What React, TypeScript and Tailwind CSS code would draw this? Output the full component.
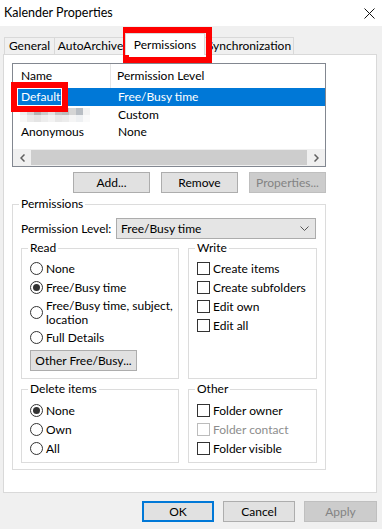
import React from "react";

function Radio({ checked }: { checked?: boolean }) {
  return (
    <span className="w-[13px] h-[13px] rounded-full border border-[#333333] bg-white flex items-center justify-center shrink-0">
      {checked && <span className="w-[7px] h-[7px] rounded-full bg-[#333333]" />}
    </span>
  );
}

function Check({ disabled }: { disabled?: boolean }) {
  return (
    <span
      className={
        disabled
          ? "w-[13px] h-[13px] border border-[#bcbcbc] bg-white shrink-0"
          : "w-[13px] h-[13px] border border-[#333333] bg-white shrink-0"
      }
    />
  );
}

function Btn({ label, w, disabled }: { label: string; w: string; disabled?: boolean }) {
  return (
    <button
      className={
        disabled
          ? `${w} h-[21px] bg-[#cccccc] border border-[#bfbfbf] text-[#838383] flex items-center justify-center`
          : `${w} h-[21px] bg-[#e1e1e1] border border-[#adadad] text-black flex items-center justify-center`
      }
    >
      {label}
    </button>
  );
}

const blur = [
  ["#eeeeee", "#d6d6d6", "#b4b4b4", "#cbcbcb", "#e2e2e2", "#c4c4c4", "#bdbdbd", "#d5d5d5", "#b9bec4", "#f2f2f2"],
  ["#f7f7f7", "#eaeaea", "#e4e4e4", "#ededed", "#f3f3f3", "#e8e8e8", "#ececec", "#f5f5f5", "#eef0f2", "#fafafa"],
];

export default function App() {
  return (
    <div className="w-[382px] h-[529px] bg-[#f0f0f0] relative overflow-hidden font-['Lato','Liberation_Sans',sans-serif] text-[12px] leading-[16px] text-black">
      {/* title bar */}
      <div className="h-[26px] bg-white flex items-center justify-between pl-[4px] pr-[7px]">
        <span className="text-[12.5px]">Kalender Properties</span>
        <svg width="11" height="11" viewBox="0 0 11 11">
          <path d="M0.5 0.5 L10.5 10.5 M10.5 0.5 L0.5 10.5" stroke="#111" strokeWidth="1" />
        </svg>
      </div>

      {/* tabs */}
      <div className="mt-[7px] h-[21px] flex items-end pl-[4px]">
        <div className="w-[51px] h-[17px] border border-b-0 border-[#d9d9d9] bg-[#f0f0f0] flex items-center justify-center">General</div>
        <div className="w-[72px] h-[17px] border border-b-0 border-l-0 border-[#d9d9d9] bg-[#f0f0f0] flex items-center justify-center">AutoArchive</div>
        <div className="w-[80px] -mx-[2px] h-[22px] border border-b-0 border-[#d9d9d9] bg-white flex items-center justify-center relative z-10 -mb-[1px]">Permissions</div>
        <div className="w-[91px] h-[17px] border border-b-0 border-l-0 border-[#d9d9d9] bg-[#f0f0f0] flex items-center justify-center pl-[2px]">Synchronization</div>
      </div>

      {/* tab page */}
      <div className="ml-[3px] w-[374px] h-[439px] bg-white border border-[#d9d9d9] pt-[8px] pl-[8px]">
        {/* list view */}
        <div className="w-[314px] h-[104px] border border-[#828790] flex flex-col">
          <div className="h-[24px] flex items-center">
            <div className="w-[98px] h-full pl-[8px] flex items-center border-r border-[#e5e5e5]">Name</div>
            <div className="pl-[6px]">Permission Level</div>
          </div>
          <div className="h-[18px] flex items-center bg-[#0078d7] text-white">
            <div className="w-[98px] pl-[8px]">Default</div>
            <div className="pl-[7px]">Free/Busy time</div>
          </div>
          <div className="h-[17px] flex items-center">
            <div className="w-[98px] pl-[7px]">
              <div className="flex flex-col w-[70px]">
                {blur.map((row, i) => (
                  <div key={i} className="flex">
                    {row.map((c, j) => (
                      <span key={j} className="w-[7px] h-[7px]" style={{ background: c }} />
                    ))}
                  </div>
                ))}
              </div>
            </div>
            <div className="pl-[7px]">Custom</div>
          </div>
          <div className="h-[17px] flex items-center">
            <div className="w-[98px] pl-[8px]">Anonymous</div>
            <div className="pl-[7px]">None</div>
          </div>
          <div className="flex-1" />
          <div className="h-[17px] flex items-center bg-[#f0f0f0]">
            <div className="w-[18px] flex justify-center">
              <svg width="5" height="8" viewBox="0 0 5 8">
                <path d="M4.5 0.5 L1 4 L4.5 7.5" stroke="#606060" strokeWidth="1.5" fill="none" />
              </svg>
            </div>
            <div className="flex-1 h-[15px] bg-[#cdcdcd]" />
            <div className="w-[18px] flex justify-center">
              <svg width="5" height="8" viewBox="0 0 5 8">
                <path d="M0.5 0.5 L4 4 L0.5 7.5" stroke="#606060" strokeWidth="1.5" fill="none" />
              </svg>
            </div>
          </div>
        </div>

        {/* list buttons */}
        <div className="w-[314px] mt-[5px] flex justify-end gap-[11px]">
          <Btn label="Add..." w="w-[77px]" />
          <Btn label="Remove" w="w-[77px]" />
          <Btn label="Properties..." w="w-[77px]" disabled />
        </div>

        {/* permissions group */}
        <fieldset className="mt-[3px] w-[314px] h-[274px] border border-[#dcdcdc]">
          <legend className="ml-[6px] px-[2px] leading-[16px]">Permissions</legend>
          <div className="mt-[6px] pl-[8px] flex items-center">
            <span className="w-[95px]">Permission Level:</span>
            <div className="w-[200px] h-[21px] bg-[#e5e5e5] border border-[#acacac] flex items-center justify-between pl-[4px] pr-[6px]">
              <span>Free/Busy time</span>
              <svg width="9" height="5" viewBox="0 0 9 5">
                <path d="M0.5 0.5 L4.5 4.5 L8.5 0.5" stroke="#555" strokeWidth="1" fill="none" />
              </svg>
            </div>
          </div>

          <div className="mt-[1px] pl-[8px] flex gap-[9px]">
            <fieldset className="w-[158px] h-[139px] border border-[#dcdcdc]">
              <legend className="ml-[6px] px-[2px] leading-[16px]">Read</legend>
              <div className="mt-[3px] pl-[8px] flex flex-col">
                <div className="h-[19px] flex items-center gap-[3px]"><Radio />None</div>
                <div className="h-[19px] flex items-center gap-[3px]"><Radio checked />Free/Busy time</div>
                <div className="h-[31px] flex items-center gap-[3px] leading-[14px]">
                  <Radio />
                  <span>Free/Busy time, subject,<br />location</span>
                </div>
                <div className="h-[19px] flex items-center gap-[3px]"><Radio />Full Details</div>
                <div className="mt-[3px]">
                  <Btn label="Other Free/Busy..." w="w-[107px]" />
                </div>
              </div>
            </fieldset>
            <fieldset className="w-[129px] h-[139px] border border-[#dcdcdc]">
              <legend className="ml-[6px] px-[2px] leading-[16px]">Write</legend>
              <div className="mt-[3px] pl-[8px] flex flex-col">
                <div className="h-[19px] flex items-center gap-[3px]"><Check />Create items</div>
                <div className="h-[19px] flex items-center gap-[3px]"><Check />Create subfolders</div>
                <div className="h-[19px] flex items-center gap-[3px]"><Check />Edit own</div>
                <div className="h-[19px] flex items-center gap-[3px]"><Check />Edit all</div>
              </div>
            </fieldset>
          </div>

          <div className="mt-[2px] pl-[8px] flex gap-[9px]">
            <fieldset className="w-[158px] h-[82px] border border-[#dcdcdc]">
              <legend className="ml-[6px] px-[2px] leading-[16px]">Delete items</legend>
              <div className="mt-[4px] pl-[8px] flex flex-col">
                <div className="h-[19px] flex items-center gap-[3px]"><Radio checked />None</div>
                <div className="h-[19px] flex items-center gap-[3px]"><Radio />Own</div>
                <div className="h-[19px] flex items-center gap-[3px]"><Radio />All</div>
              </div>
            </fieldset>
            <fieldset className="w-[129px] h-[82px] border border-[#dcdcdc]">
              <legend className="ml-[6px] px-[2px] leading-[16px]">Other</legend>
              <div className="mt-[4px] pl-[8px] flex flex-col">
                <div className="h-[19px] flex items-center gap-[3px]"><Check />Folder owner</div>
                <div className="h-[19px] flex items-center gap-[3px] text-[#8d8d8d]"><Check disabled />Folder contact</div>
                <div className="h-[19px] flex items-center gap-[3px]"><Check />Folder visible</div>
              </div>
            </fieldset>
          </div>
        </fieldset>
      </div>

      {/* dialog buttons */}
      <div className="mt-[8px] pr-[5px] flex justify-end gap-[9px]">
        <button className="w-[72px] h-[21px] bg-[#e1e1e1] border-2 border-[#0078d7] flex items-center justify-center">OK</button>
        <Btn label="Cancel" w="w-[72px]" />
        <Btn label="Apply" w="w-[73px]" disabled />
      </div>

      {/* red annotation boxes */}
      <div className="absolute left-[123px] top-[27px] w-[89px] h-[36px] border-[6px] border-[#ff0000]" />
      <div className="absolute left-[11px] top-[82px] w-[57px] h-[30px] border-[6px] border-[#ff0000]">
        <div className="w-full h-full border border-white" />
      </div>
    </div>
  );
}
